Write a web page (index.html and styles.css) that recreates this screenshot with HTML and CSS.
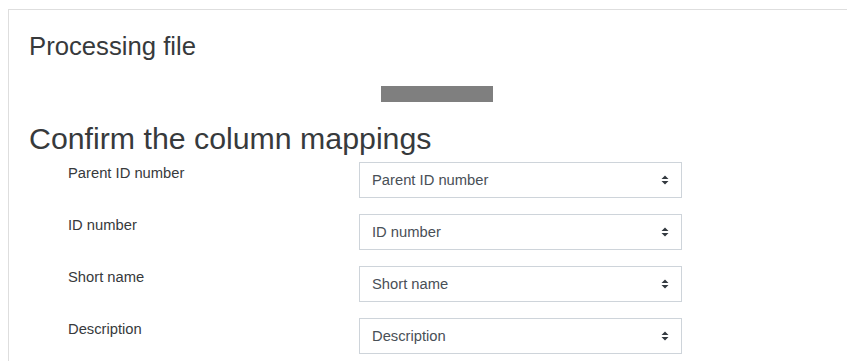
FILE: index.html
```html
<!DOCTYPE html>
<html>
<head>
<meta charset="utf-8">
<link rel="stylesheet" href="styles.css">
</head>
<body>
<div class="card">
  <h3 class="title">Processing file</h3>
  <div class="progress-wrap"><div class="progress"></div></div>
  <h2 class="heading">Confirm the column mappings</h2>
  <form class="form">
    <div class="row">
      <label class="label">Parent ID number</label>
      <div class="field">
        <select class="select"><option>Parent ID number</option></select>
        <svg class="arrow" width="8" height="10" viewBox="0 0 8 10"><path d="M4 0.5 L7.5 4 L0.5 4 Z M4 9.5 L7.5 6 L0.5 6 Z" fill="#343a40"/></svg>
      </div>
    </div>
    <div class="row">
      <label class="label">ID number</label>
      <div class="field">
        <select class="select"><option>ID number</option></select>
        <svg class="arrow" width="8" height="10" viewBox="0 0 8 10"><path d="M4 0.5 L7.5 4 L0.5 4 Z M4 9.5 L7.5 6 L0.5 6 Z" fill="#343a40"/></svg>
      </div>
    </div>
    <div class="row">
      <label class="label">Short name</label>
      <div class="field">
        <select class="select"><option>Short name</option></select>
        <svg class="arrow" width="8" height="10" viewBox="0 0 8 10"><path d="M4 0.5 L7.5 4 L0.5 4 Z M4 9.5 L7.5 6 L0.5 6 Z" fill="#343a40"/></svg>
      </div>
    </div>
    <div class="row">
      <label class="label">Description</label>
      <div class="field">
        <select class="select"><option>Description</option></select>
        <svg class="arrow" width="8" height="10" viewBox="0 0 8 10"><path d="M4 0.5 L7.5 4 L0.5 4 Z M4 9.5 L7.5 6 L0.5 6 Z" fill="#343a40"/></svg>
      </div>
    </div>
  </form>
</div>
</body>
</html>
```
FILE: styles.css
```css
html, body {
  margin: 0;
  padding: 0;
  overflow: hidden;
  background: #fff;
}
body {
  padding: 9px 0 0 8px;
  font-family: "Liberation Sans", Arial, sans-serif;
  font-size: 14.75px;
  line-height: 1.5;
  color: #373a3c;
}
.card {
  box-sizing: border-box;
  width: 858px;
  border: 1px solid #dedede;
  padding: 20px;
  background: #fff;
}
.title {
  margin: 1px 0 8px 0;
  font-size: 25.7px;
  font-weight: normal;
  line-height: 1.2;
}
.progress-wrap {
  display: flex;
  justify-content: center;
  padding-top: 16px;
}
.progress {
  width: 112px;
  height: 16px;
  background: #7f7f7f;
}
.heading {
  margin: 19px 0 5px 0;
  font-size: 30.3px;
  font-weight: normal;
  line-height: 36px;
}
.form {
  padding-left: 39px;
}
.row {
  display: grid;
  grid-template-columns: 291px 323px;
  margin-bottom: 16px;
}
.label {
  line-height: 22.5px;
}
.field {
  position: relative;
  height: 36px;
}
.select {
  -webkit-appearance: none;
  appearance: none;
  box-sizing: border-box;
  width: 323px;
  height: 36px;
  margin: 0;
  padding: 6px 30px 6px 12px;
  border: 1px solid #ced4da;
  border-radius: 0;
  background: #fff;
  font-family: "Liberation Sans", Arial, sans-serif;
  font-size: 14.75px;
  line-height: 22.5px;
  color: #495057;
}
.arrow {
  position: absolute;
  right: 13px;
  top: 13px;
  pointer-events: none;
}
```
